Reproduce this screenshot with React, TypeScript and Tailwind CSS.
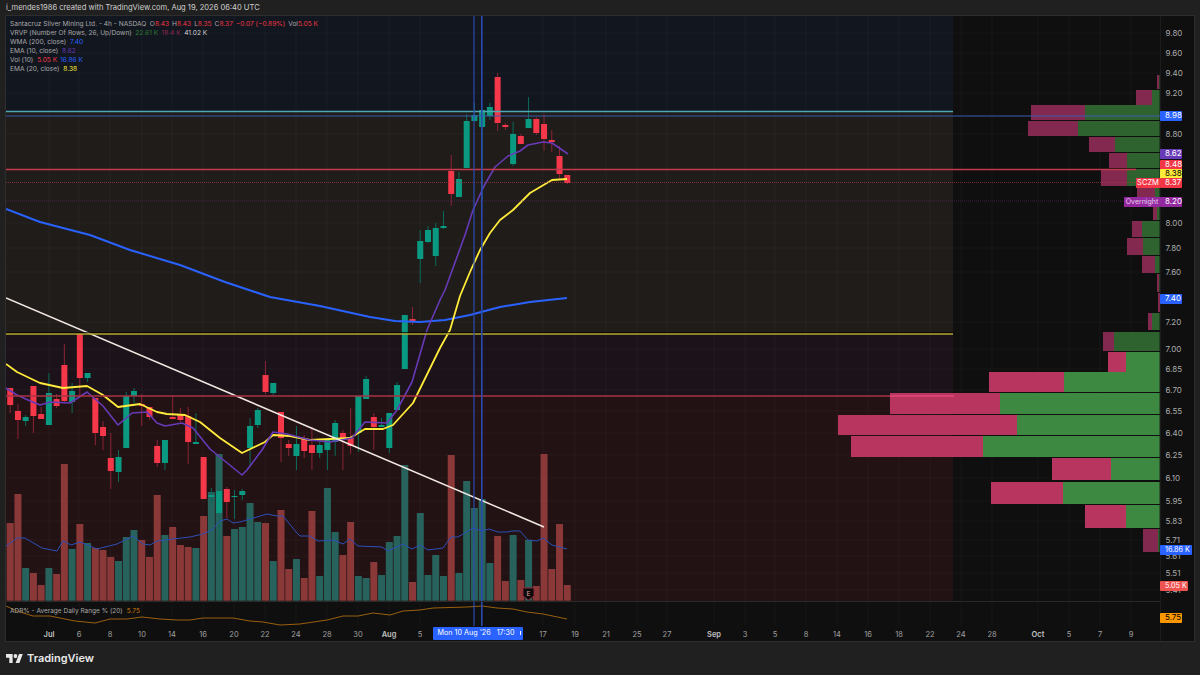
const GREEN = '#0a9a82'
const RED = '#f5374a'

// [bodyTop, bodyBottom, wickTop, wickBottom, up]
const candles: [number, number, number, number, number][] = [
  [388, 405, 388, 413, 0], [411, 420, 404, 439, 0], [417, 421, 415, 426, 1], [386, 416, 386, 433, 0],
  [414, 419, 407, 419, 0], [393, 425, 373, 425, 1], [399, 406, 394, 408, 0], [365, 401, 344, 402, 0],
  [391, 402, 383, 413, 1], [334, 378, 334, 396, 0], [373, 378, 373, 382, 1], [398, 433, 398, 445, 0],
  [427, 436, 421, 450, 0], [458, 471, 433, 489, 0], [457, 472, 450, 482, 1], [396, 448, 392, 448, 1],
  [391, 396, 388, 403, 1], [404, 406, 394, 426, 0], [407, 417, 407, 420, 0], [446, 463, 440, 467, 0],
  [440, 463, 440, 470, 1], [417, 419, 396, 419, 0], [415, 420, 408, 422, 0], [416, 442, 407, 464, 0],
  [442, 444, 413, 444, 1], [457, 499, 457, 499, 0], [495, 497, 488, 507, 1], [491, 513, 483, 553, 1],
  [489, 502, 487, 518, 0], [496, 497, 490, 519, 1], [491, 495, 489, 500, 1], [426, 448, 418, 467, 1],
  [410, 425, 408, 428, 1], [375, 392, 361, 394, 0], [383, 393, 383, 395, 1], [412, 438, 412, 462, 0],
  [444, 448, 440, 456, 0], [444, 456, 426, 470, 1], [439, 451, 435, 458, 0], [445, 453, 427, 470, 0],
  [445, 453, 442, 458, 1], [439, 450, 439, 470, 1], [423, 442, 420, 456, 1], [433, 438, 430, 470, 0],
  [438, 446, 408, 454, 0], [396, 433, 396, 452, 1], [379, 399, 376, 399, 1], [417, 427, 413, 450, 0],
  [425, 427, 418, 427, 1], [413, 448, 413, 453, 1], [385, 410, 382, 410, 1], [315, 369, 315, 369, 1],
  [319, 321, 307, 325, 0], [241, 259, 230, 283, 1], [230, 242, 226, 243, 1], [228, 256, 223, 266, 1],
  [226, 228, 211, 229, 1], [171, 194, 155, 206, 0], [179, 197, 172, 197, 1], [121, 168, 114, 168, 1],
  [115, 121, 103, 122, 1], [110, 127, 110, 200, 1], [107, 116, 103, 120, 1], [77, 123, 73, 131, 0],
  [125, 127, 123, 130, 0], [134, 164, 122, 166, 1], [136, 144, 134, 144, 0], [119, 128, 97, 128, 1],
  [119, 133, 117, 135, 0], [124, 139, 114, 151, 0], [140, 142, 130, 152, 0], [156, 174, 146, 179, 0],
  [175, 183, 175, 184, 0],
]

// volume bar tops, same index as candles
const volumes = [
  523, 494, 568, 573, 585, 568, 574, 464, 549, 524, 543, 548, 550, 557, 561, 537, 530, 540, 557, 495,
  535, 527, 545, 547, 548, 516, 492, 454, 536, 529, 527, 503, 522, 523, 561, 510, 569, 559, 578, 511,
  576, 488, 532, 555, 522, 576, 578, 562, 575, 542, 536, 465, 582, 513, 575, 555, 576, 455, 573, 481,
  508, 499, 563, 536, 581, 535, 580, 540, 586, 454, 569, 524, 585,
]

const wma = '6,209 40,222 90,235 130,250 180,265 225,282 270,297 320,306 370,317 395,321 420,322 445,320 470,315 500,307 530,302 567,298'
const ema20 = '6,364 17,372 40,383 63,388 87,386 103,395 118,407 140,404 157,412 167,414 185,415 200,422 220,438 242,453 265,442 273,435 290,436 310,440 330,439 350,438 365,429 383,429 393,425 413,403 440,348 450,330 460,296 470,272 480,250 490,233 500,220 513,210 530,193 552,180 567,179'
const ema10 = '6,388 17,395 28,400 40,405 50,402 70,403 87,392 103,406 118,425 132,413 147,412 157,423 165,426 182,423 193,428 210,449 242,475 247,470 262,450 273,432 287,434 310,440 330,442 352,438 365,422 387,423 397,410 412,382 427,330 440,300 445,290 465,235 473,210 484,186 495,167 508,156 520,151 528,145 543,142 552,143 568,154'
const volMa = '6,546 17,538 25,538 42,548 57,551 63,541 71,545 80,542 97,549 117,544 133,536 143,544 150,545 157,541 173,539 190,537 203,534 212,530 220,521 227,519 233,523 240,522 267,514 277,516 283,516 297,533 300,536 310,536 318,541 333,540 343,544 350,539 358,546 382,547 388,551 403,544 412,549 420,545 428,550 443,548 451,537 458,537 473,528 482,531 489,529 498,532 507,532 512,531 520,531 528,540 537,541 543,538 552,545 567,549'
const adr = '6,605 17,610 33,615 50,615 75,620 95,622 110,618 127,618 142,616 160,618 177,619 190,619 203,617 233,617 250,620 263,621 280,624 300,623 327,619 343,615 358,615 373,612 390,614 403,610 420,609 433,607 467,606 482,605 497,607 513,608 527,611 543,613 567,618'

// [top, bottom, left, split, bright]
const profile: [number, number, number, number, number][] = [
  [75, 89, 1157, 1159, 0], [90, 105, 1136, 1152, 0], [105, 120, 1031, 1085, 0], [121, 136, 1028, 1078, 0],
  [137, 152, 1089, 1115, 0], [153, 168, 1109, 1127, 0], [169, 186, 1101, 1127, 0], [187, 201, 1137, 1155, 0],
  [206, 220, 1153, 1157, 0], [221, 237, 1132, 1142, 0], [238, 255, 1127, 1143, 0], [256, 273, 1142, 1155, 0],
  [274, 292, 1157, 1159, 0], [293, 312, 1158, 1160, 0], [313, 330, 1148, 1152, 0], [332, 351, 1103, 1114, 0],
  [352, 372, 1108, 1126, 1], [372, 392, 989, 1064, 1], [393, 414, 890, 1000, 1], [415, 435, 838, 1017, 1],
  [436, 457, 851, 983, 1], [458, 480, 1052, 1111, 1], [482, 504, 991, 1063, 1], [505, 528, 1085, 1126, 1],
  [529, 552, 1143, 1158, 0],
]

const priceTicks: [string, number][] = [
  ['9.80', 33], ['9.60', 53], ['9.40', 73], ['9.20', 93], ['8.80', 134], ['8.00', 223], ['7.80', 248],
  ['7.60', 272], ['7.20', 322], ['7.00', 349], ['6.85', 369], ['6.70', 390], ['6.55', 411], ['6.40', 433],
  ['6.25', 455], ['6.10', 478], ['5.95', 501], ['5.83', 521], ['5.71', 540], ['5.61', 556], ['5.51', 573], ['5.41', 590],
]

const priceBoxes: { text: string; top: number; width: number; style: string }[] = [
  { text: '8.98', top: 111, width: 22, style: 'bg-[#2962ff] text-white' },
  { text: '8.62', top: 149, width: 22, style: 'bg-[#673ab7] text-white' },
  { text: '8.48', top: 160, width: 22, style: 'bg-[#f23645] text-white' },
  { text: '8.38', top: 169, width: 22, style: 'bg-[#ffeb3b] text-black' },
  { text: '8.37', top: 178, width: 22, style: 'bg-[#f23645] text-white' },
  { text: '8.20', top: 197, width: 22, style: 'bg-[#93289f] text-white' },
  { text: '7.40', top: 294, width: 22, style: 'bg-[#2962ff] text-white' },
  { text: '16.86 K', top: 545, width: 32, style: 'bg-[#2962ff] text-white text-[7.2px]' },
  { text: '5.05 K', top: 581, width: 28, style: 'bg-[#ef5350] text-white text-[7.2px]' },
  { text: '5.75', top: 613, width: 22, style: 'bg-[#ff9800] text-black' },
]

const timeTicks: [string, number, boolean][] = [
  ['Jul', 49, true], ['6', 79, false], ['8', 110, false], ['10', 142, false], ['14', 172, false], ['16', 203, false],
  ['20', 234, false], ['22', 265, false], ['24', 296, false], ['28', 327, false], ['30', 358, false], ['Aug', 389, true],
  ['5', 420, false], ['17', 543, false], ['19', 575, false], ['21', 606, false], ['25', 637, false], ['27', 667, false],
  ['Sep', 714, true], ['3', 745, false], ['5', 775, false], ['8', 806, false], ['14', 837, false], ['16', 868, false],
  ['18', 899, false], ['22', 930, false], ['24', 961, false], ['28', 992, false], ['Oct', 1038, true], ['5', 1069, false],
  ['7', 1100, false], ['9', 1131, false],
]

function Chart() {
  return (
    <svg className="block w-[1154px] h-[585px]" viewBox="6 16 1154 585">
      <rect x="6" y="16" width="1154" height="585" fill="#0f0f0f" />
      <rect x="6" y="16" width="947" height="96" fill="#12161f" />
      <rect x="6" y="112" width="947" height="222" fill="#201c1a" />
      <rect x="6" y="334" width="947" height="62" fill="#1c1219" />
      <rect x="6" y="396" width="947" height="205" fill="#221213" />

      {timeTicks.map(([label, x]) => (
        <line key={label + x} x1={x} x2={x} y1="16" y2="601" stroke="#ffffff" strokeOpacity="0.035" />
      ))}
      {priceTicks.map(([label, y]) => (
        <line key={label} x1="6" x2="1160" y1={y} y2={y} stroke="#ffffff" strokeOpacity="0.035" />
      ))}

      {volumes.map((top, i) => (
        <rect
          key={i}
          x={6.7 + 7.737 * i}
          y={top}
          width="7"
          height={600.7 - top}
          fill={candles[i][4] ? '#27625c' : '#8a3838'}
        />
      ))}

      {candles.map(([top, bottom, wickTop, wickBottom, up], i) => {
        const x = 10.2 + 7.737 * i
        return (
          <g key={i}>
            <line x1={x} x2={x} y1={wickTop} y2={wickBottom} stroke={up ? '#0b6b5b' : '#8c2436'} />
            <rect x={x - 3} y={top} width="6" height={bottom - top} fill={up ? GREEN : RED} />
          </g>
        )
      })}

      <polyline points={volMa} fill="none" stroke="#2d4fb8" strokeWidth="1" />
      <polyline points={wma} fill="none" stroke="#2962ff" strokeWidth="2" strokeLinejoin="round" />
      <polyline points={ema20} fill="none" stroke="#ffeb3b" strokeWidth="1.8" strokeLinejoin="round" />
      <polyline points={ema10} fill="none" stroke="#673ab7" strokeWidth="1.6" strokeLinejoin="round" />
      <line x1="6" y1="298" x2="544" y2="527" stroke="#f2e8e2" strokeWidth="1.5" />

      {profile.map(([top, bottom, left, split, bright]) => (
        <g key={top}>
          <rect x={left} y={top} width={split - left} height={bottom - top} fill={bright ? '#b8355f' : '#83294f'} />
          <rect x={split} y={top} width={1159.6 - split} height={bottom - top} fill={bright ? '#3e8942' : '#2e6330'} />
        </g>
      ))}

      <line x1="6" x2="953" y1="111.5" y2="111.5" stroke="#4fa8b5" strokeWidth="1.3" />
      <line x1="6" x2="1160" y1="116" y2="116" stroke="#3a5cb0" />
      <line x1="6" x2="1136" y1="169.5" y2="169.5" stroke="#c23a4c" strokeWidth="1.3" />
      <line x1="6" x2="1136" y1="182.5" y2="182.5" stroke="#a63647" strokeWidth="0.7" strokeDasharray="1 1" />
      <line x1="6" x2="1124" y1="201" y2="201" stroke="#5d2a66" strokeWidth="0.7" strokeDasharray="1 1" />
      <line x1="6" x2="953" y1="332.8" y2="332.8" stroke="#000000" />
      <line x1="6" x2="953" y1="334" y2="334" stroke="#b5a62f" strokeWidth="1.4" />
      <line x1="6" x2="890" y1="396" y2="396" stroke="#a83344" strokeWidth="1.3" />
      <line x1="890" x2="954" y1="396" y2="396" stroke="#df4a78" strokeWidth="1.3" />
      <line x1="474" x2="474" y1="16" y2="601" stroke="#2a4ab0" strokeWidth="1.2" />
      <line x1="481.8" x2="481.8" y1="16" y2="601" stroke="#2a4ab0" strokeWidth="1.6" />

      {/* earnings badge */}
      <path d="M523 588h11v8l-5.500 4l-5.500-4z" fill="#0a0a0a" stroke="#8c2436" />
      <text x="528.500" y="596" textAnchor="middle" fontSize="6.500" fill="#e0a0a0" fontFamily="Inter, sans-serif">E</text>
    </svg>
  )
}

function AdrPane() {
  return (
    <div className="relative h-[24px] border-t border-[#2a2a2a]">
      <svg className="absolute inset-0 w-[1154px] h-[24px]" viewBox="6 601 1154 24">
        {timeTicks.map(([label, x]) => (
          <line key={label + x} x1={x} x2={x} y1="601" y2="625" stroke="#ffffff" strokeOpacity="0.035" />
        ))}
        <polyline points={adr} fill="none" stroke="#a9690f" strokeWidth="0.9" />
        <line x1="474" x2="474" y1="601" y2="625" stroke="#2a4ab0" strokeWidth="1.2" />
        <line x1="481.8" x2="481.8" y1="601" y2="625" stroke="#2a4ab0" strokeWidth="1.6" />
      </svg>
      <div className="absolute left-[4px] top-[4px] flex gap-[4px] whitespace-nowrap text-[6.5px] leading-[10px] text-[#a8a8a8]">
        <span>ADR% - Average Daily Range % (20)</span>
        <span className="text-[#c8780a]">5.75</span>
      </div>
    </div>
  )
}

function TimeAxis() {
  return (
    <div className="relative h-[16px] text-[7.5px] text-[#a0a0a0]">
      {timeTicks.map(([label, x, strong]) => (
        <span
          key={label + x}
          className={`absolute top-[5px] leading-[10px] -translate-x-1/2 ${strong ? 'font-semibold text-[#c0c0c0]' : ''}`}
          style={{ left: x - 6 }}
        >
          {label}
        </span>
      ))}
      <div className="absolute left-[426.500px] top-[1.700px] w-[90.500px] h-[13.300px] bg-[#2962ff] rounded-[1px] flex items-center pl-[5px] gap-[6px] whitespace-nowrap text-white text-[7.2px]">
        <span>Mon 10 Aug &apos;26</span>
        <span>17:30</span>
        <span className="w-px h-[4px] bg-white" />
      </div>
    </div>
  )
}

function PriceAxis() {
  return (
    <div className="relative w-[34px] border-l border-[#1c1c1c] text-[8px] text-[#ababab]">
      {priceTicks.map(([label, y]) => (
        <span key={label} className="absolute left-[4.500px] leading-[10px]" style={{ top: y - 21 }}>
          {label}
        </span>
      ))}
      {priceBoxes.map((box) => (
        <span
          key={box.text}
          className={`absolute left-[-1px] h-[9.500px] leading-[9.500px] pl-[5px] rounded-[1px] whitespace-nowrap ${box.style}`}
          style={{ top: box.top - 16, width: box.width }}
        >
          {box.text}
        </span>
      ))}
      <span className="absolute right-[34px] top-[162px] h-[9.500px] w-[24px] leading-[9.500px] text-center bg-[#f23645] text-white text-[7.500px]">SCZM</span>
      <span className="absolute right-[34px] top-[181px] h-[9.500px] w-[36px] leading-[9.500px] text-center bg-[#93289f] text-[#e8d0ec] text-[7px]">Overnight</span>
    </div>
  )
}

function Legend() {
  const row = 'h-[9.200px] leading-[9.200px] whitespace-nowrap'
  return (
    <div className="absolute left-[4px] top-[3.500px] text-[6.600px] text-[#a8a8a8]">
      <div className={row}>
        Santacruz Silver Mining Ltd. - 4h - NASDAQ
        <span className="ml-[3.500px]">O<span className="text-[#f23645]">8.43</span></span>
        <span className="ml-[3px]">H<span className="text-[#f23645]">8.43</span></span>
        <span className="ml-[3px]">L<span className="text-[#f23645]">8.35</span></span>
        <span className="ml-[3px]">C<span className="text-[#f23645]">8.37</span></span>
        <span className="ml-[3px] text-[#f23645]">−0.07 (−0.89%)</span>
        <span className="ml-[3px]">Vol<span className="text-[#f23645]">5.05 K</span></span>
      </div>
      <div className={row}>
        VRVP (Number Of Rows, 26, Up/Down)
        <span className="ml-[3.500px] text-[#2e7d32]">22.61 K</span>
        <span className="ml-[3.500px] text-[#8a2a50]">18.4 K</span>
        <span className="ml-[3.500px] text-[#d4d4d4]">41.02 K</span>
      </div>
      <div className={row}>WMA (200, close) <span className="ml-[2px] text-[#2962ff]">7.40</span></div>
      <div className={row}>EMA (10, close) <span className="ml-[2px] text-[#673ab7]">8.62</span></div>
      <div className={row}>
        Vol (10) <span className="ml-[2px] text-[#f23645]">5.05 K</span>
        <span className="ml-[3px] text-[#2962ff]">16.86 K</span>
      </div>
      <div className={row}>EMA (20, close) <span className="ml-[2px] text-[#ffeb3b]">8.38</span></div>
    </div>
  )
}

export default function App() {
  return (
    <div className="w-[1200px] h-[675px] overflow-hidden flex flex-col bg-[#202020] font-['Inter',sans-serif]">
      <div className="h-[15px] pl-[6px] pt-[3px] text-[7.550px] leading-[10px] whitespace-nowrap text-[#d0d0d0]">
        i_mendes1986 created with TradingView.com, Aug 19, 2026 06:40 UTC
      </div>
      <div className="h-[627px] mx-[5px] border border-[#2e2e2e] bg-[#0f0f0f] flex">
        <div className="w-[1154px] flex flex-col">
          <div className="relative h-[585px]">
            <Chart />
            <Legend />
          </div>
          <AdrPane />
          <TimeAxis />
        </div>
        <PriceAxis />
      </div>
      <div className="h-[33px] pl-[6px] flex items-center gap-[4px]">
        <svg className="w-[17px] h-[9.500px]" viewBox="0 4 36 18" preserveAspectRatio="none" fill="#e8e8e8">
          <path d="M14 22H7V11H0V4h14v18zM28 22h-8l7.500-18h8L28 22z" />
          <circle cx="20" cy="8" r="4" />
        </svg>
        <span className="text-[11px] font-semibold text-[#e8e8e8]">TradingView</span>
      </div>
    </div>
  )
}
